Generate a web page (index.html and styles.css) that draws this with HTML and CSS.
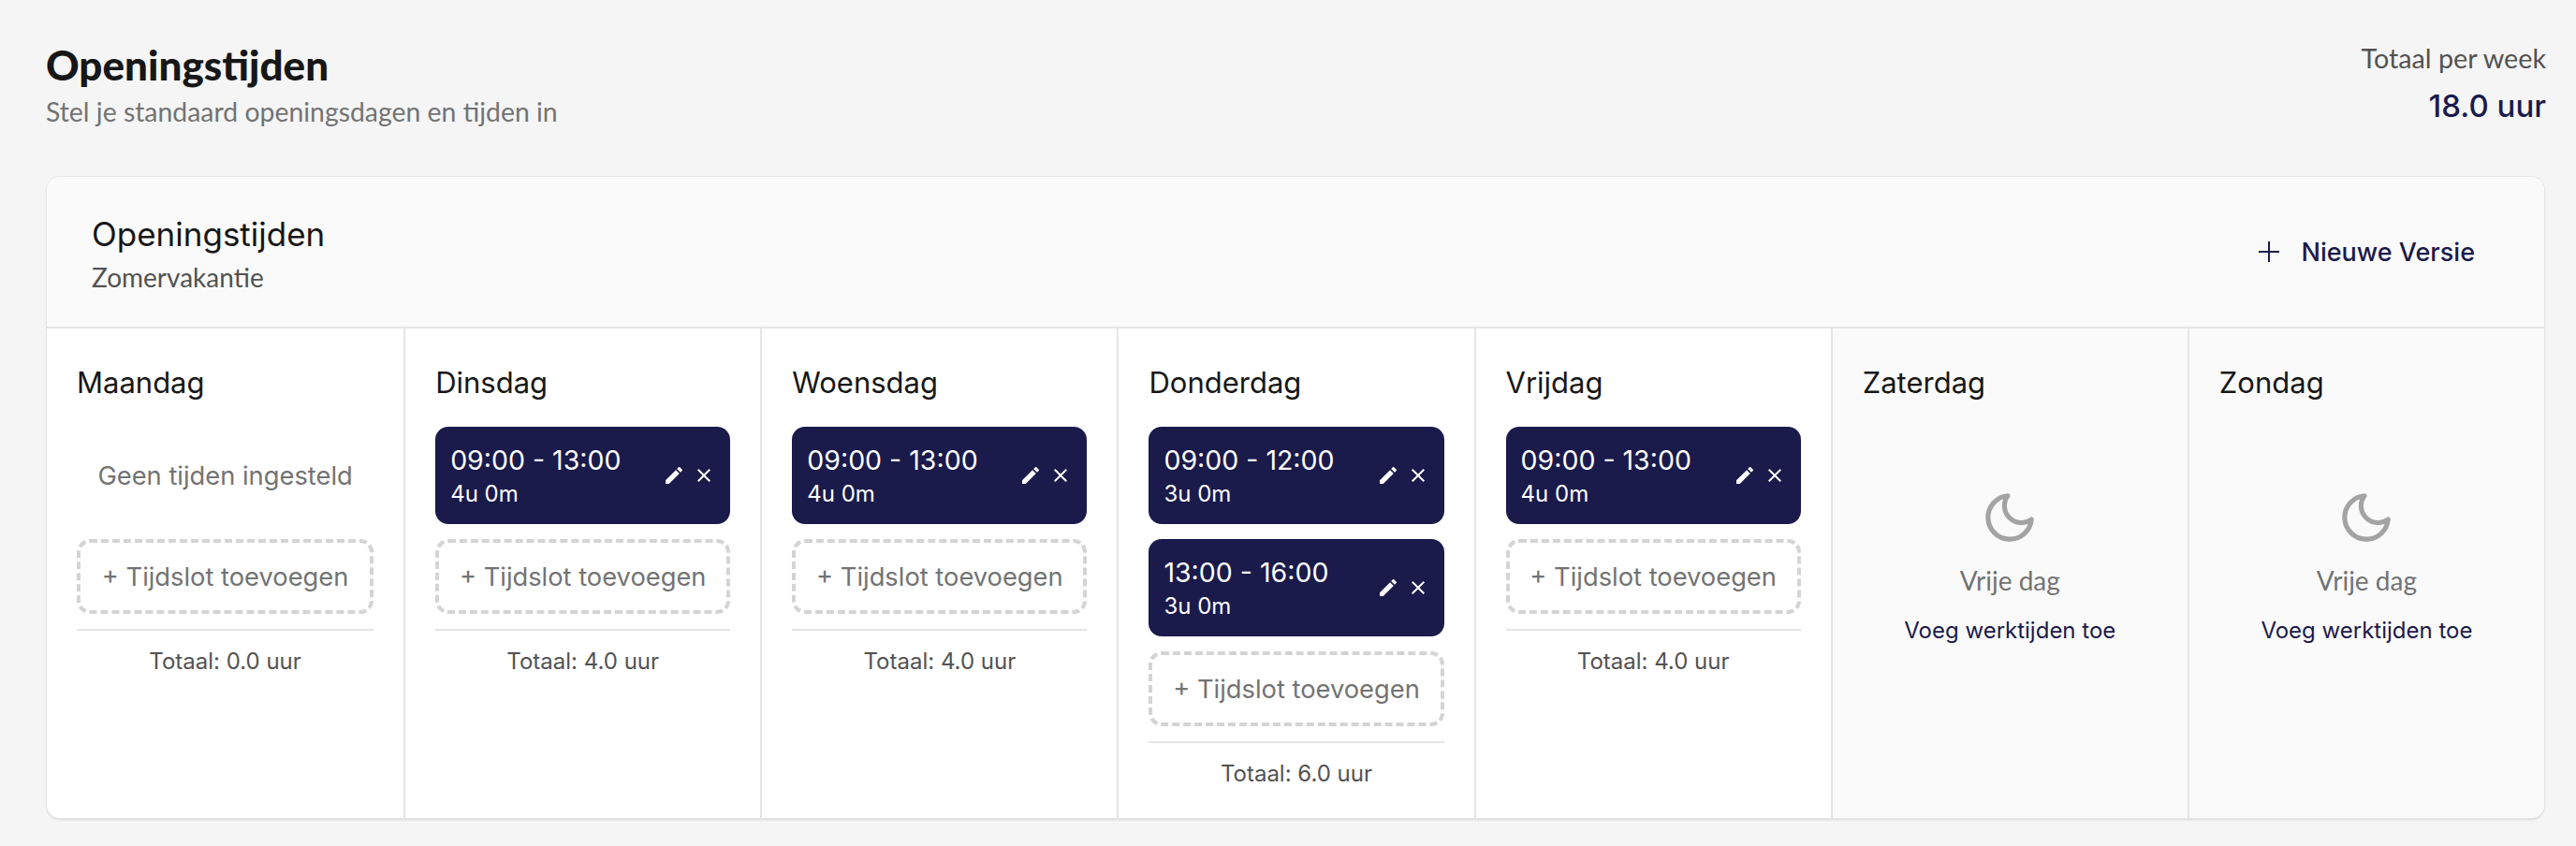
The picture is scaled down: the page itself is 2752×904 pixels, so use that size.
FILE: index.html
```html
<!DOCTYPE html>
<html lang="en">
<head>
    <meta charset="UTF-8">
    <meta name="viewport" content="width=device-width, initial-scale=1.0">
    <title>Openingstijden</title>
    <link rel="stylesheet" href="styles.css">
</head>
<body>
    <div class="page">
        <div class="top">
            <div>
                <h1>Openingstijden</h1>
                <p class="sub">Stel je standaard openingsdagen en tijden in</p>
            </div>
            <div class="week">
                <p class="week-label">Totaal per week</p>
                <p class="week-value">18.0 uur</p>
            </div>
        </div>

        <div class="card">
            <div class="card-head">
                <div>
                    <h2>Openingstijden</h2>
                    <p class="version">Zomervakantie</p>
                </div>
                <button class="new-version">
                    <svg width="24" height="24" viewBox="0 0 24 24"><path d="M12 1v22M1 12h22" stroke="currentColor" stroke-width="2" fill="none"/></svg>
                    Nieuwe Versie
                </button>
            </div>

            <div class="days">
                <div class="day">
                    <h3>Maandag</h3>
                    <p class="no-times">Geen tijden ingesteld</p>
                    <button class="add">+ Tijdslot toevoegen</button>
                    <p class="total">Totaal: 0.0 uur</p>
                </div>

                <div class="day">
                    <h3>Dinsdag</h3>
                    <div class="slot">
                        <div>
                            <p class="time">09:00 - 13:00</p>
                            <p class="length">4u 0m</p>
                        </div>
                        <div class="slot-icons">
                            <svg width="24" height="24" viewBox="0 0 24 24"><path d="M3 17.25V21h3.75L17.81 9.94l-3.75-3.75L3 17.25zM20.71 7.04a.996.996 0 0 0 0-1.41l-2.34-2.34a.996.996 0 0 0-1.41 0l-1.83 1.83 3.75 3.75 1.83-1.83z"/></svg>
                            <svg width="24" height="24" viewBox="0 0 24 24"><path d="M19 6.41L17.59 5 12 10.59 6.41 5 5 6.41 10.59 12 5 17.59 6.41 19 12 13.41 17.59 19 19 17.59 13.41 12z"/></svg>
                        </div>
                    </div>
                    <button class="add">+ Tijdslot toevoegen</button>
                    <p class="total">Totaal: 4.0 uur</p>
                </div>

                <div class="day">
                    <h3>Woensdag</h3>
                    <div class="slot">
                        <div>
                            <p class="time">09:00 - 13:00</p>
                            <p class="length">4u 0m</p>
                        </div>
                        <div class="slot-icons">
                            <svg width="24" height="24" viewBox="0 0 24 24"><path d="M3 17.25V21h3.75L17.81 9.94l-3.75-3.75L3 17.25zM20.71 7.04a.996.996 0 0 0 0-1.41l-2.34-2.34a.996.996 0 0 0-1.41 0l-1.83 1.83 3.75 3.75 1.83-1.83z"/></svg>
                            <svg width="24" height="24" viewBox="0 0 24 24"><path d="M19 6.41L17.59 5 12 10.59 6.41 5 5 6.41 10.59 12 5 17.59 6.41 19 12 13.41 17.59 19 19 17.59 13.41 12z"/></svg>
                        </div>
                    </div>
                    <button class="add">+ Tijdslot toevoegen</button>
                    <p class="total">Totaal: 4.0 uur</p>
                </div>

                <div class="day">
                    <h3>Donderdag</h3>
                    <div class="slot">
                        <div>
                            <p class="time">09:00 - 12:00</p>
                            <p class="length">3u 0m</p>
                        </div>
                        <div class="slot-icons">
                            <svg width="24" height="24" viewBox="0 0 24 24"><path d="M3 17.25V21h3.75L17.81 9.94l-3.75-3.75L3 17.25zM20.71 7.04a.996.996 0 0 0 0-1.41l-2.34-2.34a.996.996 0 0 0-1.41 0l-1.83 1.83 3.75 3.75 1.83-1.83z"/></svg>
                            <svg width="24" height="24" viewBox="0 0 24 24"><path d="M19 6.41L17.59 5 12 10.59 6.41 5 5 6.41 10.59 12 5 17.59 6.41 19 12 13.41 17.59 19 19 17.59 13.41 12z"/></svg>
                        </div>
                    </div>
                    <div class="slot">
                        <div>
                            <p class="time">13:00 - 16:00</p>
                            <p class="length">3u 0m</p>
                        </div>
                        <div class="slot-icons">
                            <svg width="24" height="24" viewBox="0 0 24 24"><path d="M3 17.25V21h3.75L17.81 9.94l-3.75-3.75L3 17.25zM20.71 7.04a.996.996 0 0 0 0-1.41l-2.34-2.34a.996.996 0 0 0-1.41 0l-1.83 1.83 3.75 3.75 1.83-1.83z"/></svg>
                            <svg width="24" height="24" viewBox="0 0 24 24"><path d="M19 6.41L17.59 5 12 10.59 6.41 5 5 6.41 10.59 12 5 17.59 6.41 19 12 13.41 17.59 19 19 17.59 13.41 12z"/></svg>
                        </div>
                    </div>
                    <button class="add">+ Tijdslot toevoegen</button>
                    <p class="total">Totaal: 6.0 uur</p>
                </div>

                <div class="day">
                    <h3>Vrijdag</h3>
                    <div class="slot">
                        <div>
                            <p class="time">09:00 - 13:00</p>
                            <p class="length">4u 0m</p>
                        </div>
                        <div class="slot-icons">
                            <svg width="24" height="24" viewBox="0 0 24 24"><path d="M3 17.25V21h3.75L17.81 9.94l-3.75-3.75L3 17.25zM20.71 7.04a.996.996 0 0 0 0-1.41l-2.34-2.34a.996.996 0 0 0-1.41 0l-1.83 1.83 3.75 3.75 1.83-1.83z"/></svg>
                            <svg width="24" height="24" viewBox="0 0 24 24"><path d="M19 6.41L17.59 5 12 10.59 6.41 5 5 6.41 10.59 12 5 17.59 6.41 19 12 13.41 17.59 19 19 17.59 13.41 12z"/></svg>
                        </div>
                    </div>
                    <button class="add">+ Tijdslot toevoegen</button>
                    <p class="total">Totaal: 4.0 uur</p>
                </div>

                <div class="day off">
                    <h3>Zaterdag</h3>
                    <div class="free">
                        <svg width="62" height="62" viewBox="0 0 24 24"><path d="M21 12.79A9 9 0 1 1 11.21 3 7 7 0 0 0 21 12.79z" fill="none" stroke="currentColor" stroke-width="2" stroke-linejoin="round"/></svg>
                        <p class="free-label">Vrije dag</p>
                        <a class="free-link">Voeg werktijden toe</a>
                    </div>
                </div>

                <div class="day off">
                    <h3>Zondag</h3>
                    <div class="free">
                        <svg width="62" height="62" viewBox="0 0 24 24"><path d="M21 12.79A9 9 0 1 1 11.21 3 7 7 0 0 0 21 12.79z" fill="none" stroke="currentColor" stroke-width="2" stroke-linejoin="round"/></svg>
                        <p class="free-label">Vrije dag</p>
                        <a class="free-link">Voeg werktijden toe</a>
                    </div>
                </div>
            </div>
        </div>
    </div>
</body>
</html>
```

FILE: styles.css
```css
*{
    margin: 0;
    padding: 0;
    box-sizing: border-box;
}
body{
    background-color: #f5f5f5;
    font-family: "Inter", "Liberation Sans", sans-serif;
    color: #171717;
}
.page{
    padding: 43px 32px 28px 49px;
}
.top{
    display: flex;
    justify-content: space-between;
    align-items: flex-start;
    height: 146px;
}
h1{
    font-family: "Lato", sans-serif;
    font-size: 44px;
    line-height: 52px;
    font-weight: 900;
}
.sub{
    font-family: "Lato", sans-serif;
    font-size: 28.4px;
    line-height: 32px;
    color: #737373;
    margin-top: 8px;
}
.week{
    text-align: right;
    margin-top: 3px;
}
.week-label{
    font-family: "Lato", sans-serif;
    font-size: 28.7px;
    line-height: 32px;
    color: #525252;
}
.week-value{
    font-size: 33px;
    line-height: 44px;
    font-weight: 500;
    color: #1a1a4b;
    margin-top: 13px;
}
.card{
    width: 2668px;
    height: 685px;
    margin-left: 1px;
    background-color: #fff;
    border-radius: 14px;
    box-shadow: 0 0 0 1px #e5e5e5, 0 2px 3px rgba(0,0,0,0.12);
    overflow: hidden;
    display: flex;
    flex-direction: column;
}
.card-head{
    display: flex;
    justify-content: space-between;
    align-items: center;
    height: 162px;
    padding: 0 74px 0 48px;
    background-color: #fafafa;
    border-bottom: 2px solid #e5e5e5;
}
h2{
    font-size: 35px;
    line-height: 44px;
    font-weight: 400;
    margin-top: 2px;
}
.version{
    font-family: "Lato", sans-serif;
    font-size: 28px;
    line-height: 32px;
    color: #525252;
    margin-top: 8px;
}
.new-version{
    display: flex;
    align-items: center;
    gap: 22px;
    border: none;
    background-color: transparent;
    color: #1a1a4b;
    font-family: inherit;
    font-size: 27px;
    font-weight: 500;
}
.days{
    flex: auto;
    display: grid;
    grid-template-columns: repeat(7, 1fr);
}
.day{
    display: flex;
    flex-direction: column;
    padding: 36px 32px 0;
    border-left: 2px solid #e5e5e5;
}
.day:first-child{
    border-left: none;
}
.off{
    background-color: #fafafa;
}
h3{
    font-size: 31px;
    line-height: 44px;
    font-weight: 400;
    margin-bottom: 25px;
}
.no-times{
    display: flex;
    align-items: center;
    justify-content: center;
    height: 104px;
    margin-bottom: 16px;
    font-size: 27.3px;
    color: #737373;
}
.slot{
    display: flex;
    justify-content: space-between;
    align-items: center;
    height: 104px;
    padding: 0 16px;
    margin-bottom: 16px;
    background-color: #1a1a4b;
    border-radius: 14px;
    color: #fff;
}
.time{
    font-size: 28.5px;
    line-height: 40px;
}
.length{
    font-size: 24px;
    line-height: 32px;
}
.slot-icons{
    display: flex;
    align-items: center;
    gap: 8px;
}
.slot-icons svg{
    fill: #fff;
}
.add{
    height: 80px;
    border: 4px dashed #d4d4d4;
    border-radius: 14px;
    background-color: transparent;
    color: #737373;
    font-family: inherit;
    font-size: 27.3px;
}
.total{
    margin-top: 16px;
    padding-top: 17px;
    border-top: 2px solid #e5e5e5;
    font-size: 24px;
    line-height: 32px;
    color: #525252;
    text-align: center;
}
.free{
    display: flex;
    flex-direction: column;
    align-items: center;
    padding-top: 66px;
    color: #a3a3a3;
}
.free-label{
    font-family: "Lato", sans-serif;
    font-size: 28px;
    line-height: 36px;
    color: #737373;
    margin-top: 18px;
}
.free-link{
    font-size: 24px;
    line-height: 32px;
    color: #1a1a4b;
    margin-top: 20px;
}
```
